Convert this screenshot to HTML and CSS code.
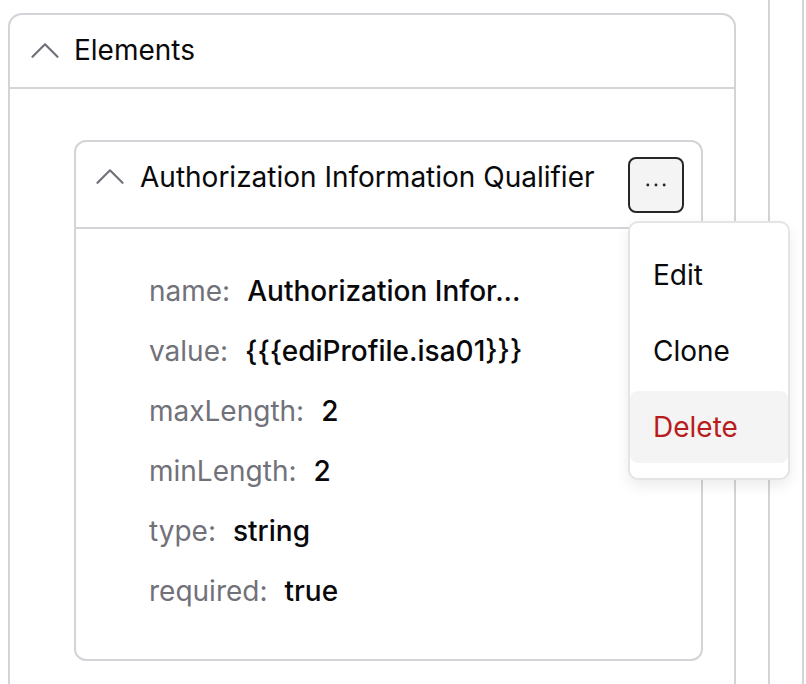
FILE: index.html
```html
<!DOCTYPE html>
<html lang="en">
<head>
  <meta charset="UTF-8">
  <title>Elements</title>
  <link rel="stylesheet" href="styles.css">
</head>
<body>
  <!-- parent panels, only their right edges show -->
  <div class="frame">
    <div class="frame-inner">

      <section class="card">
        <div class="card-head">
          <svg class="chevron" viewBox="0 0 28 15"><path d="M1.5 13.8 L14 1.3 L26.5 13.8" /></svg>
          <span>Elements</span>
        </div>

        <div class="card-body">
          <div class="element">
            <div class="element-head">
              <div class="element-label">
                <svg class="chevron" viewBox="0 0 28 15"><path d="M1.5 13.8 L14 1.3 L26.5 13.8" /></svg>
                <span>Authorization Information Qualifier</span>
              </div>
              <div class="menu-wrap">
                <button class="more">
                  <svg viewBox="0 0 22 4"><circle cx="2" cy="2" r="1.6" /><circle cx="11" cy="2" r="1.6" /><circle cx="20" cy="2" r="1.6" /></svg>
                </button>
                <ul class="menu">
                  <li>Edit</li>
                  <li>Clone</li>
                  <li class="danger">Delete</li>
                </ul>
              </div>
            </div>

            <dl class="props">
              <div class="prop"><dt>name:</dt><dd>Authorization Infor...</dd></div>
              <div class="prop"><dt>value:</dt><dd>{{{ediProfile.isa01}}}</dd></div>
              <div class="prop"><dt>maxLength:</dt><dd>2</dd></div>
              <div class="prop"><dt>minLength:</dt><dd>2</dd></div>
              <div class="prop"><dt>type:</dt><dd>string</dd></div>
              <div class="prop"><dt>required:</dt><dd>true</dd></div>
            </dl>
          </div>
        </div>
      </section>

    </div>
  </div>
</body>
</html>
```

FILE: styles.css
```css
* { box-sizing: border-box; }

body {
  margin: 0;
  font-family: "Inter", "Liberation Sans", sans-serif;
  font-size: 28px;
  color: #09090b;
  background: #fff;
  overflow: hidden;
}

.frame {
  width: 804px;
  height: 684px;
  border-right: 2px solid #d4d4d8;
  padding-right: 32px;
}

.frame-inner {
  height: 100%;
  border-right: 2px solid #d4d4d8;
  padding: 13px 32px 0 8px;
}

.card {
  border: 2px solid #d4d4d8;
  border-bottom: none;
  border-radius: 14px 14px 0 0;
  height: 700px;
}

.card-head {
  display: flex;
  align-items: center;
  gap: 15px;
  height: 74px;
  padding: 0 0 2px 21px;
  border-bottom: 2px solid #d4d4d8;
}

.chevron {
  width: 28px;
  height: 15px;
  flex: none;
}

.chevron path {
  fill: none;
  stroke: #71717a;
  stroke-width: 2.2;
  stroke-linecap: round;
  stroke-linejoin: round;
}

.card-body {
  padding: 51px 31px 40px 64px;
}

.element {
  border: 2px solid #d4d4d8;
  border-radius: 12px;
}

.element-head {
  display: flex;
  align-items: center;
  justify-content: space-between;
  height: 87px;
  padding: 0 17px 0 20px;
  border-bottom: 2px solid #d4d4d8;
}

.element-label {
  display: flex;
  align-items: center;
  gap: 16px;
  margin-bottom: 16px;
}

.menu-wrap {
  position: relative;
}

.more {
  display: flex;
  align-items: center;
  justify-content: center;
  width: 56px;
  height: 56px;
  margin: 0;
  padding: 0;
  background: #f4f4f5;
  border: 2px solid #27272a;
  border-radius: 8px;
}

.more svg {
  width: 20px;
  height: 4px;
  fill: #27272a;
}

.menu {
  position: absolute;
  top: 64px;
  left: 0;
  width: 162px;
  margin: 0;
  padding: 16px 0 15px;
  list-style: none;
  background: #fff;
  border: 2px solid #e4e4e7;
  border-radius: 10px;
  box-shadow: 0 6px 14px rgba(0,0,0,0.08);
  display: flex;
  flex-direction: column;
  gap: 4px;
}

.menu li {
  height: 72px;
  line-height: 72px;
  padding-left: 23px;
  border-radius: 8px;
}

.menu li.danger {
  color: #b91c1c;
  background: #f4f4f5;
}

.props {
  margin: 0;
  padding: 44px 20px 50px 73px;
  display: flex;
  flex-direction: column;
  gap: 24px;
}

.prop {
  display: flex;
  gap: 17px;
  line-height: 36px;
}

.prop dt {
  color: #71717a;
}

.prop dd {
  margin: 0;
  font-weight: 500;
}
```
